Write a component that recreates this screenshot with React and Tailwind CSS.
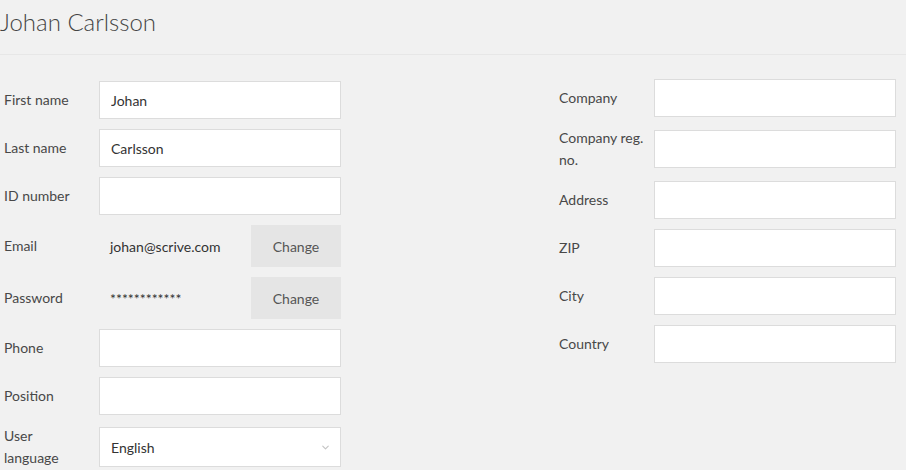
import { ChevronDown } from 'lucide-react';

const font = { fontFamily: 'Lato, "Open Sans", sans-serif' };

function Row({ label, children, className = '' }) {
  return (
    <div className={`flex items-center mb-[10px] ${className}`}>
      <div className="w-[99px] shrink-0 pl-[4px] pr-[6px] text-[14px] leading-[22px] text-[#484848]">
        {label}
      </div>
      {children}
    </div>
  );
}

function TextInput({ value = '' }) {
  return (
    <input
      defaultValue={value}
      className="h-[38px] w-[242px] border border-[#dcdcdc] bg-white px-[11px] text-[14px] text-[#333] outline-none"
      style={font}
    />
  );
}

function ChangeRow({ label, value }) {
  return (
    <Row label={label}>
      <div className="flex w-[242px] items-center">
        <span className="flex-1 pl-[11px] text-[14px] text-[#333]">{value}</span>
        <button className="h-[42px] w-[90px] bg-[#e5e5e5] text-[14px] text-[#555]" style={font}>
          Change
        </button>
      </div>
    </Row>
  );
}

export default function App() {
  return (
    <div className="min-h-[470px] w-[906px] bg-[#f1f1f1] text-[#444]" style={font}>
      <div className="h-[55px] border-b border-[#e7e7e7]">
        <h1 className="pt-[6px] text-[24px] font-light leading-[32px] text-[#444]">Johan Carlsson</h1>
      </div>

      <div className="flex justify-between pr-[10px]">
        <div className="w-[341px] pt-[26px]">
          <Row label="First name">
            <TextInput value="Johan" />
          </Row>
          <Row label="Last name">
            <TextInput value="Carlsson" />
          </Row>
          <Row label="ID number">
            <TextInput />
          </Row>
          <ChangeRow label="Email" value="johan@scrive.com" />
          <ChangeRow label="Password" value="************" />
          <Row label="Phone">
            <TextInput />
          </Row>
          <Row label="Position">
            <TextInput />
          </Row>
          <Row label={<>User<br />language</>}>
            <div className="relative flex h-[40px] w-[242px] items-center border border-[#dcdcdc] bg-white px-[11px] text-[14px] text-[#333]">
              English
              <ChevronDown className="absolute right-[9px] top-[14px] h-[11px] w-[11px] text-[#c4c4c4]" strokeWidth={2.5} />
            </div>
          </Row>
        </div>

        <div className="w-[341px] pt-[24px]">
          <Row label="Company">
            <TextInput />
          </Row>
          <Row label={<>Company reg.<br />no.</>}>
            <TextInput />
          </Row>
          <Row label="Address">
            <TextInput />
          </Row>
          <Row label="ZIP">
            <TextInput />
          </Row>
          <Row label="City">
            <TextInput />
          </Row>
          <Row label="Country">
            <TextInput />
          </Row>
        </div>
      </div>
    </div>
  );
}
